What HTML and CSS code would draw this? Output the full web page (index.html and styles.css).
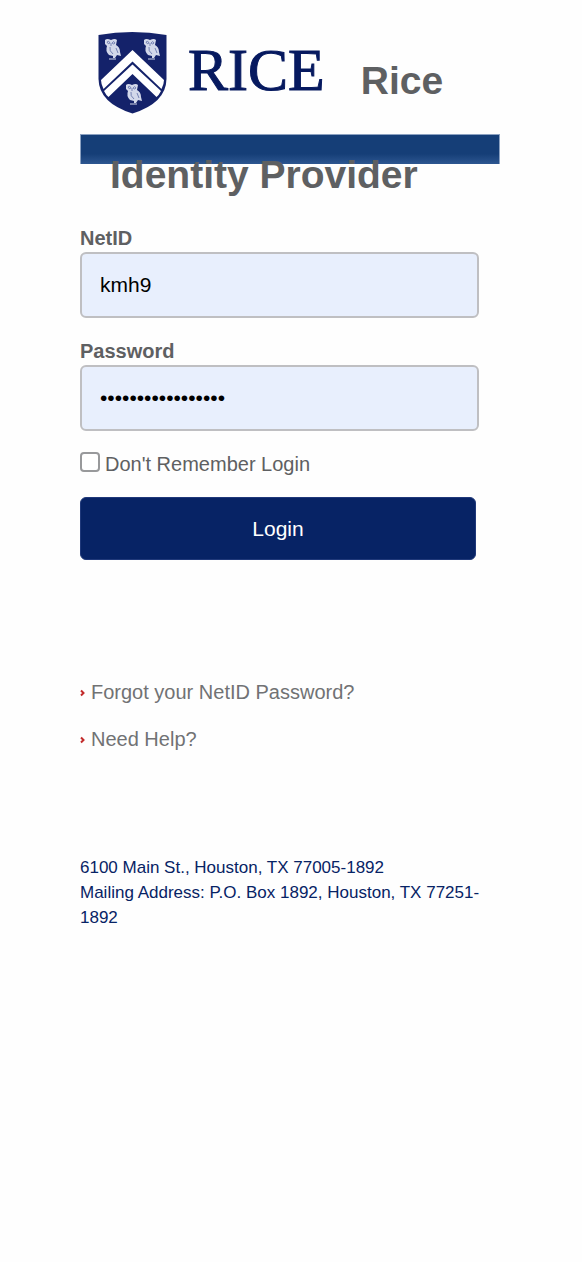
FILE: index.html
```html
<!DOCTYPE html>
<html lang="en">
<head>
<meta charset="utf-8">
<meta name="viewport" content="width=device-width, initial-scale=1">
<title>Rice Identity Provider</title>
<link rel="stylesheet" href="styles.css">
</head>
<body>
<div class="page">
  <header class="banner">
    <h1 class="title">
      <svg class="logo" viewBox="80 34 268 88" role="img" aria-label="Rice University">
        <defs>
          <g id="owl">
            <path fill="#d3d8ea" d="M1 1Q3-1 7 1Q11-1 13 1L12 6Q16 8 16 13L17 17L13 16L11 19L9 19L9 17L5 16Q1 12 3 7L1 5Z"/>
            <path fill="none" stroke="#7683b4" stroke-width="1" d="M3 3Q5 1 6 4Q4 6 3 3M8 4Q10 1 11 4Q10 6 8 4M7 4L7 7M6 8Q5 12 9 15M12 9L14 14"/>
            <path fill="none" stroke="#d3d8ea" stroke-width="1" d="M5 20H12"/>
          </g>
        </defs>
        <path class="shield" d="M97.500 35Q131 29 165.500 35V79Q165 103 131.500 113.500Q98 103 97.500 79Z"/>
        <path fill="#fff" d="M131.500 50L163 80Q163 84 160.500 89L131.500 61.500L102.500 89Q100 84 100 80Z"/>
        <path fill="#fff" d="M131.500 64.500L160 91Q158 95 155.500 97L131.500 74L107.500 97Q105 95 103 91Z"/>
        <use href="#owl" x="103" y="39"/>
        <use href="#owl" x="142" y="39"/>
        <use href="#owl" x="124" y="84"/>
        <text class="wordmark" x="187" y="90">RICE</text>
      </svg>
      Rice Identity Provider
    </h1>
  </header>

  <main>
    <form class="form">
      <div>
        <label class="label" for="netid">NetID</label>
        <input class="field" id="netid" type="text" value="kmh9">
      </div>
      <div>
        <label class="label" for="password">Password</label>
        <input class="field" id="password" type="password" value="abcdefghijklmnopq">
      </div>
      <div class="remember">
        <input class="check" id="remember" type="checkbox">
        <label for="remember">Don't Remember Login</label>
      </div>
      <button class="login" type="button">Login</button>
    </form>

    <nav class="links">
      <a class="link" href="#forgot"><svg class="arrow" viewBox="0 0 5 8" aria-hidden="true"><path d="M1 1.500L3.500 4L1 6.500"/></svg>Forgot your NetID Password?</a>
      <a class="link" href="#help"><svg class="arrow" viewBox="0 0 5 8" aria-hidden="true"><path d="M1 1.500L3.500 4L1 6.500"/></svg>Need Help?</a>
    </nav>
  </main>

  <footer class="footer">
    6100 Main St., Houston, TX 77005-1892<br>
    Mailing Address: P.O. Box 1892, Houston, TX 77251-1892
  </footer>
</div>
</body>
</html>
```
FILE: styles.css
```css
* {
  box-sizing: border-box;
}

body {
  margin: 0;
  background: #fefefe;
  color: #5e6062;
  font-family: "Liberation Sans", Arial, sans-serif;
  font-size: 20px;
  line-height: 28px;
}

.page {
  max-width: 422px;
  margin: 0 auto;
  padding-right: 2px;
}

.banner {
  position: relative;
  z-index: 0;
  padding: 34px 0 2px 30px;
}

/* Blue stripe that runs behind the title */
.banner::before {
  content: "";
  position: absolute;
  z-index: -1;
  top: 134px;
  left: 0;
  right: 0;
  height: 29px;
  border: 1px solid #8ba1c1;
  border-bottom: 0;
  background: linear-gradient(#153e77 65%, #2d5690);
}

.title {
  margin: 0;
  font-size: 39px;
  line-height: 94px;
}

.logo {
  width: 270px;
  height: 88px;
  margin-left: -30px;
  vertical-align: top;
  overflow: visible;
}

.shield {
  fill: #14226a;
}

.wordmark {
  fill: #06195f;
  stroke: #06195f;
  stroke-width: 1px;
  font-family: "Liberation Serif", "Times New Roman", serif;
  font-size: 60px;
  font-weight: 400;
}

.form {
  display: flex;
  flex-direction: column;
  gap: 19px;
}

.label {
  display: block;
  font-weight: 700;
}

.field {
  display: block;
  width: 95%;
  height: 66px;
  padding: 0 18px;
  border: 2px solid #bfbfc2;
  border-radius: 6px;
  background: #e8effd;
  color: #000;
  font-family: inherit;
  font-size: 21px;
}

.remember {
  display: flex;
  gap: 5px;
}

.check {
  appearance: none;
  width: 20px;
  height: 20px;
  margin: 2px 0 0;
  border: 2px solid #98999b;
  border-radius: 4px;
  background: #fff;
}

.check:checked {
  background: #072365;
}

.login {
  width: 396px;
  max-width: 100%;
  height: 63px;
  border: 1px solid #20397a;
  border-radius: 6px;
  background: #072365;
  color: #fff;
  font-family: inherit;
  font-size: 21px;
}

.links {
  display: flex;
  flex-direction: column;
  align-items: flex-start;
  gap: 19px;
  margin-top: 118px;
}

.link {
  display: flex;
  align-items: center;
  gap: 6px;
  color: #717274;
  text-decoration: none;
}

.arrow {
  width: 5px;
  height: 8px;
  margin-top: 2px;
  fill: none;
  stroke: #c22a2a;
  stroke-width: 2;
}

.footer {
  margin-top: 102px;
  color: #072365;
  font-size: 17px;
  line-height: 25px;
}
```
